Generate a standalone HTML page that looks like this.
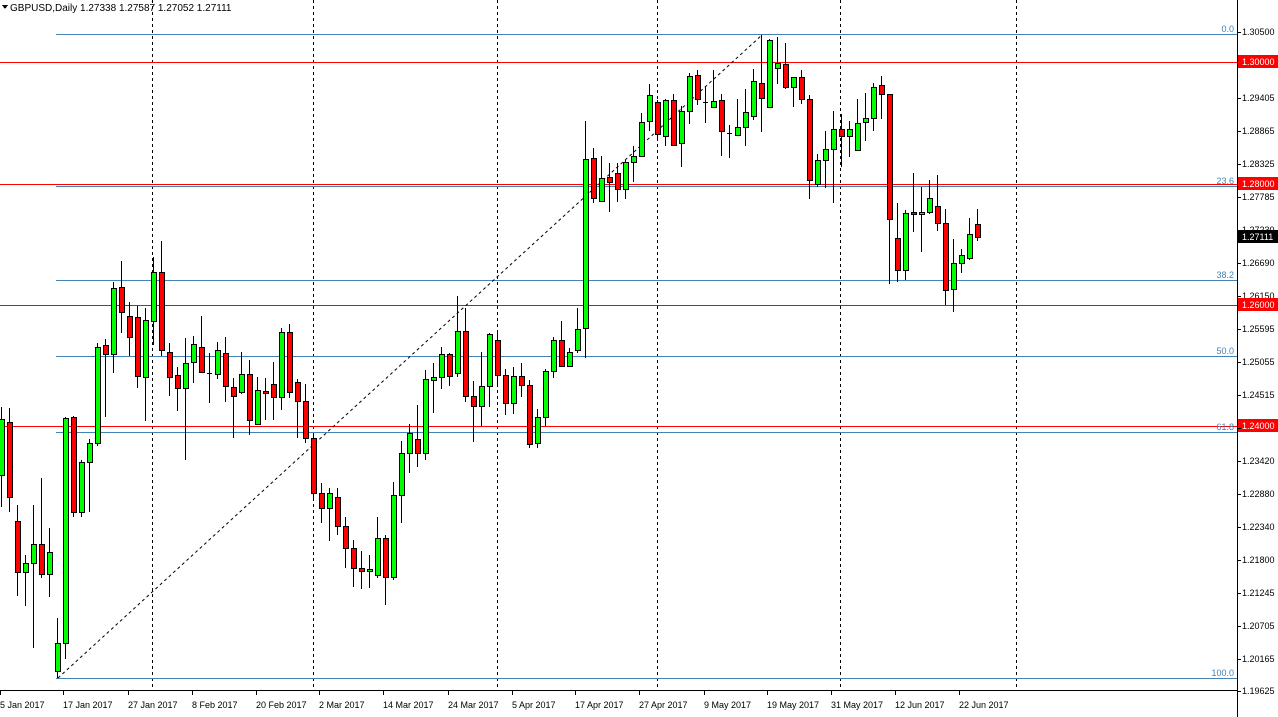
<!DOCTYPE html>
<html><head><meta charset="utf-8"><style>
html,body{margin:0;padding:0;background:#fff;width:1278px;height:717px;overflow:hidden}
svg{display:block;font-family:"Liberation Sans",sans-serif}
</style></head><body>
<svg id="s" width="1278" height="717" viewBox="0 0 1278 717" xmlns="http://www.w3.org/2000/svg" shape-rendering="crispEdges">
<rect width="1278" height="717" fill="#fff"/>
<g stroke="#000" stroke-dasharray="3,3" stroke-width="1">
<line x1="152.5" y1="0" x2="152.5" y2="690"/><line x1="313.5" y1="0" x2="313.5" y2="690"/>
<line x1="497.5" y1="0" x2="497.5" y2="690"/><line x1="657.5" y1="0" x2="657.5" y2="690"/>
<line x1="840.5" y1="0" x2="840.5" y2="690"/><line x1="1016.5" y1="0" x2="1016.5" y2="690"/>
</g>
<g stroke="#4682b4" stroke-width="1">
<line x1="56" y1="34.5" x2="1237" y2="34.5"/><line x1="56" y1="186.5" x2="1237" y2="186.5"/>
<line x1="56" y1="280.5" x2="1237" y2="280.5"/><line x1="56" y1="356.5" x2="1237" y2="356.5"/>
<line x1="56" y1="432.5" x2="1237" y2="432.5"/><line x1="56" y1="678.5" x2="1237" y2="678.5"/>
</g>
<g stroke="#ff0000" stroke-width="1">
<line x1="0" y1="62.5" x2="1237" y2="62.5"/><line x1="0" y1="184.5" x2="1237" y2="184.5"/>
<line x1="0" y1="305.5" x2="1237" y2="305.5"/><line x1="0" y1="426.5" x2="1237" y2="426.5"/>
</g>
<line x1="58" y1="678" x2="762" y2="35" stroke="#000" stroke-dasharray="3,3" shape-rendering="auto"/>
<g fill="#4682b4" font-size="9" text-anchor="end">
<text x="1234" y="32">0.0</text><text x="1234" y="184">23.6</text><text x="1234" y="278">38.2</text>
<text x="1234" y="354">50.0</text><text x="1234" y="430">61.8</text><text x="1234" y="676">100.0</text>
</g>
<g id="c"></g>
<line x1="1237.5" y1="0" x2="1237.5" y2="717" stroke="#000"/>
<line x1="0" y1="690.5" x2="1237" y2="690.5" stroke="#000"/>
<g font-size="9" fill="#000">
<text x="10" y="11" font-size="10">GBPUSD,Daily  1.27338 1.27587 1.27052 1.27111</text>
<path d="M2 5h6l-3 4z" fill="#000"/>
</g>
<g font-size="9" fill="#000" id="ax">
<text x="1242" y="35">1.30500</text><text x="1242" y="101">1.29405</text><text x="1242" y="134">1.28865</text>
<text x="1242" y="167">1.28325</text><text x="1242" y="200">1.27785</text><text x="1242" y="233">1.27230</text>
<text x="1242" y="266">1.26690</text><text x="1242" y="299">1.26150</text><text x="1242" y="332">1.25595</text>
<text x="1242" y="365">1.25055</text><text x="1242" y="398">1.24515</text><text x="1242" y="431">1.23960</text>
<text x="1242" y="464">1.23420</text><text x="1242" y="497">1.22880</text><text x="1242" y="530">1.22340</text>
<text x="1242" y="563">1.21800</text><text x="1242" y="596">1.21245</text><text x="1242" y="629">1.20705</text>
<text x="1242" y="662">1.20165</text><text x="1242" y="694">1.19625</text>
</g>
<g>
<rect x="1238" y="55" width="40" height="13" fill="#ff0000"/><text x="1242" y="65" font-size="9" fill="#fff">1.30000</text>
<rect x="1238" y="177" width="40" height="13" fill="#ff0000"/><text x="1242" y="187" font-size="9" fill="#fff">1.28000</text>
<rect x="1238" y="298" width="40" height="13" fill="#ff0000"/><text x="1242" y="308" font-size="9" fill="#fff">1.26000</text>
<rect x="1238" y="419" width="40" height="13" fill="#ff0000"/><text x="1242" y="429" font-size="9" fill="#fff">1.24000</text>
<rect x="1238" y="230" width="40" height="13" fill="#000"/><text x="1242" y="240" font-size="9" fill="#fff">1.27111</text>
</g>
<g font-size="9" fill="#000">
<text x="0" y="708">5 Jan 2017</text><text x="63" y="708">17 Jan 2017</text><text x="128" y="708">27 Jan 2017</text>
<text x="192" y="708">8 Feb 2017</text><text x="256" y="708">20 Feb 2017</text><text x="319" y="708">2 Mar 2017</text>
<text x="383" y="708">14 Mar 2017</text><text x="448" y="708">24 Mar 2017</text><text x="512" y="708">5 Apr 2017</text>
<text x="575" y="708">17 Apr 2017</text><text x="639" y="708">27 Apr 2017</text><text x="704" y="708">9 May 2017</text>
<text x="767" y="708">19 May 2017</text><text x="831" y="708">31 May 2017</text><text x="895" y="708">12 Jun 2017</text>
<text x="959" y="708">22 Jun 2017</text>
</g>
<g stroke="#000" id="tk"></g>
</svg>
<script>
var d=[[419,475,407,507,'g'],[422,497,408,512,'r'],[521,572,505,596,'r'],[563,572,555,606,'g'],[544,563,505,648,'g'],[544,574,478,578,'r'],[552,574,528,597,'g'],[643,671,618,678,'g'],[418,643,417,659,'g'],[417,512,416,517,'r'],
[462,512,460,517,'g'],[443,462,439,512,'g'],[347,443,343,446,'g'],[345,354,339,417,'r'],[288,354,282,373,'g'],[287,312,261,333,'r'],[316,337,302,356,'r'],[317,376,306,388,'r'],[320,377,308,421,'g'],[272,321,257,345,'g'],
[272,350,241,356,'r'],[352,377,343,396,'r'],[375,388,367,411,'r'],[363,388,338,460,'g'],[344,362,336,383,'g'],[347,372,316,373,'r'],[373,373,353,403,'d'],[350,374,342,379,'g'],[353,386,337,402,'r'],[387,396,378,438,'r'],
[374,392,352,394,'g'],[374,420,360,435,'r'],[390,424,377,425,'g'],[391,393,378,420,'r'],[384,397,362,420,'r'],[332,397,328,410,'g'],[332,392,324,398,'r'],[382,401,379,438,'r'],[401,438,384,443,'r'],[438,493,433,500,'r'],
[493,508,483,523,'r'],[493,508,488,541,'g'],[497,526,488,535,'r'],[526,548,517,568,'r'],[548,568,540,587,'r'],[568,571,551,589,'r'],[569,571,555,588,'g'],[538,575,517,578,'g'],[538,577,535,605,'r'],[495,577,482,580,'g'],
[453,495,441,523,'g'],[433,453,424,473,'g'],[439,453,405,467,'r'],[379,453,370,460,'g'],[377,380,363,413,'g'],[354,377,347,389,'g'],[354,376,353,386,'r'],[331,373,296,377,'g'],[331,396,308,402,'r'],[396,406,381,442,'r'],
[386,406,352,426,'g'],[334,386,333,407,'g'],[340,375,330,387,'r'],[375,403,369,415,'r'],[376,403,367,414,'g'],[376,385,363,397,'r'],[385,444,380,448,'r'],[417,443,409,448,'g'],[371,417,369,426,'g'],[340,371,337,378,'g'],
[340,366,321,366,'r'],[352,366,348,367,'g'],[329,350,308,353,'g'],[159,328,121,358,'g'],[158,198,148,203,'r'],[178,201,156,201,'g'],[177,182,163,212,'r'],[173,189,163,202,'r'],[162,189,160,199,'g'],[156,162,146,182,'g'],
[122,156,113,156,'g'],[95,121,84,131,'g'],[102,134,100,138,'r'],[100,136,99,146,'g'],[100,145,94,145,'r'],[111,143,106,167,'g'],[76,111,73,124,'g'],[75,99,70,105,'r'],[102,102,87,123,'d'],[101,107,70,107,'g'],
[100,131,94,156,'r'],[133,133,125,158,'d'],[127,135,99,135,'g'],[112,127,89,146,'g'],[81,116,69,120,'g'],[83,98,35,132,'r'],[40,107,39,107,'g'],[63,68,37,84,'g'],[64,87,43,89,'r'],[77,87,77,107,'g'],
[77,99,70,104,'r'],[99,180,95,199,'r'],[160,184,154,187,'g'],[149,160,131,188,'g'],[129,149,111,203,'g'],[129,136,114,167,'r'],[129,136,121,157,'g'],[123,150,99,151,'g'],[118,122,93,141,'g'],[87,118,83,131,'g'],
[85,94,76,119,'r'],[94,219,94,284,'r'],[238,270,203,282,'r'],[213,270,210,280,'g'],[212,214,173,232,'r'],[212,214,187,252,'g'],[198,212,180,214,'g'],[206,223,175,231,'r'],[223,290,209,305,'r'],[263,289,239,312,'g'],
[255,263,249,273,'g'],[234,258,218,260,'g'],[224,237,209,241,'r']];
var ns='http://www.w3.org/2000/svg',g=document.getElementById('c');
function el(n,a){var e=document.createElementNS(ns,n);for(var k in a)e.setAttribute(k,a[k]);g.appendChild(e);}
d.forEach(function(c,k){var x=Math.round(0.5+8*k);
el('line',{x1:x+0.5,x2:x+0.5,y1:c[2],y2:c[3],stroke:'#000'});
if(c[4]=='d'){el('line',{x1:x-2,x2:x+3,y1:c[0]+0.5,y2:c[0]+0.5,stroke:'#000'});}
else el('rect',{x:x-2+0.5,y:c[0]+0.5,width:5,height:Math.max(1,c[1]-c[0]),fill:c[4]=='g'?'#00ff00':'#ff0000',stroke:'#000'});
});
var t=document.getElementById('tk');
[0,63,128,192,256,319,383,448,512,575,639,704,767,831,895,959].forEach(function(x){var e=document.createElementNS(ns,'line');e.setAttribute('x1',x+0.5);e.setAttribute('x2',x+0.5);e.setAttribute('y1',690);e.setAttribute('y2',695);t.appendChild(e);});
[32,98,131,164,197,230,263,296,329,362,395,428,461,494,527,560,593,626,659,691].forEach(function(y){var e=document.createElementNS(ns,'line');e.setAttribute('x1',1237);e.setAttribute('x2',1241);e.setAttribute('y1',y+0.5);e.setAttribute('y2',y+0.5);t.appendChild(e);});
</script>
</body></html>
